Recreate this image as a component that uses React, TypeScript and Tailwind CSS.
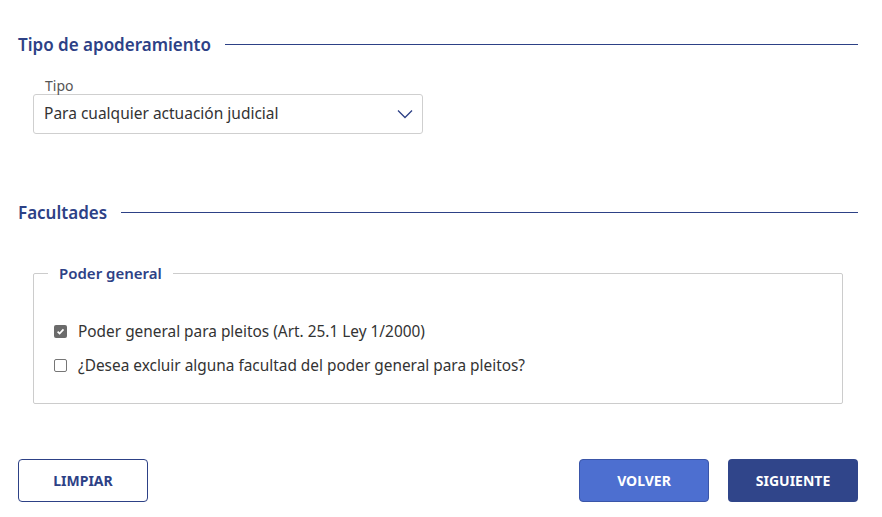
import { useState } from 'react';

const font = { fontFamily: '"Noto Sans", "Open Sans", sans-serif' };

const SectionTitle = ({ title }: { title: string }) => (
    <div className="flex items-center gap-[14px]">
        <h2 className="text-[17px] font-semibold leading-none text-[#2d4186]">{title}</h2>
        <div className="h-px flex-1 bg-[#2d4186]" />
    </div>
);

const Checkbox = ({ checked, onChange, label }: { checked: boolean; onChange: () => void; label: string }) => (
    <label className="flex items-center gap-[11px] cursor-pointer" onClick={onChange}>
        <span
            className={
                checked
                    ? 'flex h-[13px] w-[13px] items-center justify-center rounded-[2px] bg-[#6b6b6b]'
                    : 'h-[13px] w-[13px] rounded-[2px] border border-[#767676] bg-white'
            }
        >
            {checked && (
                <svg width="9" height="9" viewBox="0 0 10 10" fill="none">
                    <path d="M1.8 5.2 L4 7.3 L8.3 2.6" stroke="white" strokeWidth="1.9" />
                </svg>
            )}
        </span>
        <span className="text-[15.4px] leading-[22px] text-[#333]">{label}</span>
    </label>
);

const App = () => {
    const [general, setGeneral] = useState(true);
    const [excluir, setExcluir] = useState(false);

    return (
        <div className="min-h-[517px] w-[882px] bg-white px-[18px] pt-[36px] pr-[24px]" style={font}>
            <SectionTitle title="Tipo de apoderamiento" />

            <div className="ml-[15px] mt-[26px] w-[390px]">
                <div className="ml-[12px] text-[14px] leading-none text-[#555]">Tipo</div>
                <div className="mt-[1px] flex h-[40px] items-center justify-between rounded-[3px] border border-[#cfcfcf] pl-[10px] pr-[9px]">
                    <span className="text-[15.5px] text-[#333]">Para cualquier actuación judicial</span>
                    <svg width="16" height="10" viewBox="0 0 16 10" fill="none">
                        <path d="M1 1.5 L8 8.5 L15 1.5" stroke="#2d4186" strokeWidth="1.3" />
                    </svg>
                </div>
            </div>

            <div className="mt-[70px]">
                <SectionTitle title="Facultades" />
            </div>

            <fieldset className="ml-[15px] mr-[15px] mt-[41px] rounded-[2px] border border-[#cccccc] px-[20px] pb-[26px] pt-[36px]">
                <legend className="-ml-[6px] px-[11px] text-[15px] font-semibold text-[#2d4186]">Poder general</legend>
                <div className="flex flex-col gap-[12px]">
                    <Checkbox
                        checked={general}
                        onChange={() => setGeneral(!general)}
                        label="Poder general para pleitos (Art. 25.1 Ley 1/2000)"
                    />
                    <Checkbox
                        checked={excluir}
                        onChange={() => setExcluir(!excluir)}
                        label="¿Desea excluir alguna facultad del poder general para pleitos?"
                    />
                </div>
            </fieldset>

            <div className="mt-[55px] flex items-center justify-between">
                <button className="h-[43px] w-[130px] rounded-[4px] border border-[#2d4186] bg-white text-[14px] font-bold text-[#2d4186]">
                    LIMPIAR
                </button>
                <div className="flex gap-[19px]">
                    <button className="h-[43px] w-[130px] rounded-[4px] border border-[#3a55a8] bg-[#4d6fd0] text-[14px] font-bold text-white">
                        VOLVER
                    </button>
                    <button className="h-[43px] w-[130px] rounded-[4px] bg-[#30458a] text-[14px] font-bold text-white">
                        SIGUIENTE
                    </button>
                </div>
            </div>
        </div>
    );
};

export default App;
